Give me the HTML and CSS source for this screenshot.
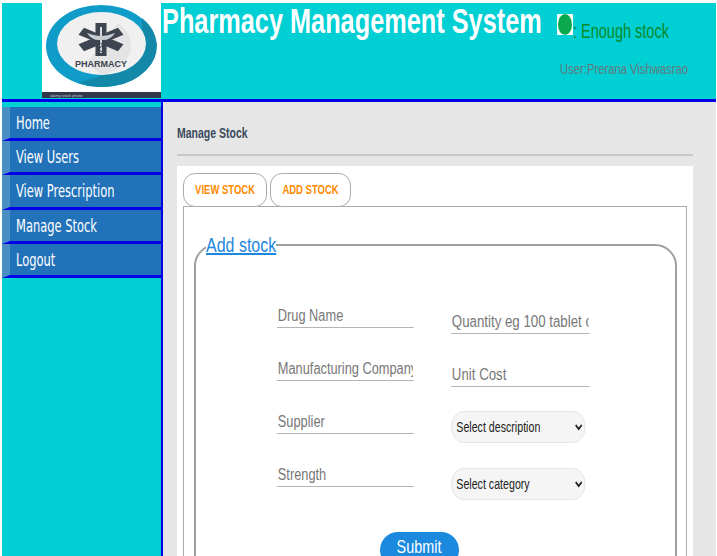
FILE: index.html
```html
<!DOCTYPE html>
<html lang="en">
<head>
  <meta charset="UTF-8">
  <title>Pharmacy Management System</title>
  <link rel="stylesheet" href="styles.css">
</head>
<body>
  <div class="page">
    <!-- Top banner -->
    <header class="banner">
      <svg class="logo" viewBox="0 0 119 95" width="119" height="95">
        <rect width="119" height="95" fill="#ffffff"/>
        <ellipse cx="59" cy="43" rx="55" ry="41" fill="#0f9cc9"/>
        <path d="M100 15 A55 41 0 0 1 36 80 L62 72 Q92 66 100 40Z" fill="#1388a8"/>
        <ellipse cx="59.5" cy="40.5" rx="44.5" ry="31.5" fill="#f0f0f0"/>
        <path d="M76 20 A44.5 31.5 0 0 1 60 72 L44 60Z" fill="#e4e4e4"/>
        <g fill="#3e4450" transform="translate(59 36.5) scale(1.38 1)">
          <rect x="-4" y="-16.5" width="8" height="33"/>
          <rect x="-4" y="-16.5" width="8" height="33" transform="rotate(60)"/>
          <rect x="-4" y="-16.5" width="8" height="33" transform="rotate(-60)"/>
        </g>
        <path d="M59 24 V50" stroke="#d8dade" stroke-width="2" fill="none"/>
        <path d="M45 30 Q53 33 59 33 Q65 33 73 30 Q68 38 59 37 Q50 38 45 30Z" fill="#c9ccd1"/>
        <path d="M55 39 Q63 41 59 44 Q55 46 60 49" stroke="#3e4450" stroke-width="1" fill="none"/>
        <text class="logo-name" x="59" y="64" text-anchor="middle">PHARMACY</text>
        <rect y="89" width="119" height="6" fill="#33374a"/>
        <text class="logo-credit" x="8" y="94">alamy stock photo</text>
      </svg>
      <h1 class="title"><span class="title-text">Pharmacy Management System</span></h1>
      <div class="status">
        <div class="legend-line">
          <span class="dot-box"><span class="dot"></span></span>
          <span class="legend-text">: Enough stock</span>
        </div>
        <div class="user"><span class="user-text">User:Prerana Vishwasrao</span></div>
      </div>
    </header>

    <div class="content">
      <!-- Left menu -->
      <nav class="sidebar">
        <a class="nav-item"><span class="nav-text">Home</span></a>
        <a class="nav-item"><span class="nav-text">View Users</span></a>
        <a class="nav-item"><span class="nav-text">View Prescription</span></a>
        <a class="nav-item"><span class="nav-text">Manage Stock</span></a>
        <a class="nav-item"><span class="nav-text">Logout</span></a>
      </nav>

      <main class="main">
        <h2 class="page-title"><span class="page-title-text">Manage Stock</span></h2>
        <hr class="rule">
        <div class="panel">
          <div class="tabs">
            <a class="tab tab-view"><span class="tab-text">VIEW STOCK</span></a>
            <a class="tab tab-add"><span class="tab-text">ADD STOCK</span></a>
          </div>
          <div class="tab-body">
            <fieldset class="stock-box">
              <legend class="stock-legend"><span class="stock-legend-text">Add stock</span></legend>
              <form class="stock-form">
                <div class="form-cols">
                  <div class="col col-left">
                    <input class="field" type="text" placeholder="Drug Name">
                    <input class="field" type="text" placeholder="Manufacturing Company">
                    <input class="field" type="text" placeholder="Supplier">
                    <input class="field" type="text" placeholder="Strength">
                  </div>
                  <div class="col col-right">
                    <input class="field" type="text" placeholder="Quantity eg 100 tablet or 10 bottles">
                    <input class="field" type="text" placeholder="Unit Cost">
                    <select class="picker picker-first"><option>Select description</option></select>
                    <select class="picker"><option>Select category</option></select>
                  </div>
                </div>
                <button type="button" class="submit-btn"><span class="submit-text">Submit</span></button>
              </form>
            </fieldset>
          </div>
        </div>
      </main>
    </div>
  </div>
</body>
</html>
```

FILE: styles.css
```css
/* Global Reset */
* {
  box-sizing: border-box;
  margin: 0;
  padding: 0;
}
html, body {
  height: 100%;
  overflow: hidden;
  background-color: #fff;
}
body {
  font-family: "Liberation Sans", Arial, sans-serif;
}
.page {
  width: 714px;
  height: 553px;
  margin-top: 3px;
  margin-left: 2px;
  display: flex;
  flex-direction: column;
  overflow: hidden;
}

/* Banner */
.banner {
  height: 99px;
  flex-shrink: 0;
  background-color: #00cfd4;
  border-bottom: 3px solid #0000e6;
  display: flex;
  align-items: flex-start;
  padding-left: 40px;
}
.logo {
  display: block;
  flex-shrink: 0;
}
.logo-name {
  font-family: "Liberation Sans", Arial, sans-serif;
  font-weight: bold;
  font-size: 9px;
  fill: #3e4450;
}
.logo-credit {
  font-family: "Liberation Sans", Arial, sans-serif;
  font-size: 4px;
  fill: #c8cad2;
}
.title {
  font-size: 35px;
  line-height: 36px;
  font-weight: bold;
  color: #fff;
  white-space: nowrap;
  width: 396px;
  flex-shrink: 0;
  padding-left: 1px;
}
/* The screenshot is squeezed sideways, so text gets a horizontal scale */
.title-text {
  display: inline-block;
  transform: scaleX(0.723);
  transform-origin: left;
}
.status {
  padding-top: 11px;
}
.legend-line {
  display: flex;
  align-items: flex-start;
  height: 24px;
}
.dot-box {
  width: 16px;
  height: 21px;
  flex-shrink: 0;
  background-color: #fff;
  display: flex;
  justify-content: center;
}
.dot {
  width: 14px;
  height: 21px;
  border-radius: 50%;
  background-color: #0aa84f;
}
.legend-text {
  font-size: 20px;
  line-height: 24px;
  padding-top: 5px;
  color: #0a8a2a;
  white-space: nowrap;
  transform: scaleX(0.725);
  transform-origin: left;
}
.user {
  font-size: 15px;
  color: #66797d;
  margin-top: 22px;
  margin-left: 3px;
  white-space: nowrap;
}
.user-text {
  display: inline-block;
  transform: scaleX(0.75);
  transform-origin: left;
}

.content {
  flex: 1;
  display: flex;
  min-height: 0;
}

/* Left menu */
.sidebar {
  width: 161px;
  flex-shrink: 0;
  background-color: #00cfd4;
  border-right: 2px solid #0000e6;
  padding-top: 4.5px;
}
.nav-item {
  display: block;
  height: 34.4px;
  line-height: 32px;
  background-color: #2272b9;
  border-left: 8px solid #4a8fc4;
  border-bottom: 3px solid #0000e6;
  padding-left: 6px;
  font-family: "DejaVu Sans Condensed", "DejaVu Sans", sans-serif;
  font-size: 17px;
  color: #fff;
  white-space: nowrap;
}
.nav-text {
  display: inline-block;
  transform: scaleX(0.75);
  transform-origin: left;
}

/* Main area */
.main {
  flex: 1;
  background-color: #e6e6e6;
  padding: 22px 23px 0 14px;
  min-width: 0;
  overflow: hidden;
}
.page-title {
  font-size: 15px;
  line-height: 18px;
  font-weight: bold;
  color: #3a4a5e;
  white-space: nowrap;
}
.page-title-text {
  display: inline-block;
  transform: scaleX(0.7);
  transform-origin: left;
}
.rule {
  border: none;
  height: 2px;
  background-color: #c8c8c8;
  margin-top: 12px;
}
.panel {
  background-color: #fff;
  margin-top: 10px;
  padding: 7px 6px 0;
}

/* Tabs */
.tabs {
  display: flex;
  gap: 3px;
  height: 34px;
  position: relative;
  z-index: 1;
}
.tab {
  height: 34px;
  border: 1px solid #aaa;
  border-radius: 12px;
  background-color: #fff;
  color: #ff8a00;
  font-weight: bold;
  font-size: 13px;
  line-height: 32px;
  display: flex;
  justify-content: center;
  white-space: nowrap;
}
.tab-text {
  flex-shrink: 0;
  transform: scaleX(0.73);
}
.tab-view {
  width: 84px;
}
.tab-add {
  width: 81px;
}
.tab-body {
  border: 1px solid #aaa;
  margin-top: -1px;
  padding: 26px 9px 0 10px;
  height: 460px;
}

/* Add stock box */
.stock-box {
  border: 2px solid #a0a0a0;
  border-radius: 22px;
  height: 400px;
}
.stock-legend {
  margin-left: 10px;
  width: 70px;
  font-size: 20px;
  line-height: 24px;
  color: #1b87dd;
  white-space: nowrap;
}
.stock-legend-text {
  display: inline-block;
  text-decoration: underline;
  transform: scaleX(0.8);
  transform-origin: left;
}
.stock-form {
  padding-left: 81px;
}
.form-cols {
  display: flex;
  gap: 37px;
  padding-top: 39px;
}
.col {
  width: 138px;
  display: flex;
  flex-direction: column;
}
.col-left {
  width: 137px;
}
.col-right {
  padding-top: 6px;
}
.field {
  display: block;
  height: 32px;
  margin-bottom: 21px;
  border: none;
  border-bottom: 1px solid #b5b5b5;
  outline: none;
  background: transparent;
  padding: 8px 1px 0;
  font-family: "Liberation Sans", Arial, sans-serif;
  font-size: 16px;
  transform-origin: left;
}
.col-left .field {
  width: 171px;
  transform: scaleX(0.8);
}
.col-right .field {
  width: 167px;
  transform: scaleX(0.83);
}
.field::placeholder {
  color: #777;
  opacity: 1;
}
.picker {
  display: block;
  width: 177px;
  height: 32px;
  margin-bottom: 25px;
  border: 1px solid #e2e2e2;
  border-radius: 16px;
  background-color: #f5f5f5;
  padding-left: 2px;
  font-family: "Liberation Sans", Arial, sans-serif;
  font-size: 14px;
  color: #222;
  transform: scaleX(0.76);
  transform-origin: left;
}
.picker-first {
  margin-top: 3px;
}
.submit-btn {
  display: flex;
  justify-content: center;
  width: 79px;
  height: 36px;
  margin: 7px 0 0 103px;
  border: none;
  border-radius: 18px;
  background-color: #1b8ade;
  color: #fff;
  font-family: "Liberation Sans", Arial, sans-serif;
  font-size: 18px;
  line-height: 30px;
}
.submit-text {
  flex-shrink: 0;
  transform: scaleX(0.8);
}
```
